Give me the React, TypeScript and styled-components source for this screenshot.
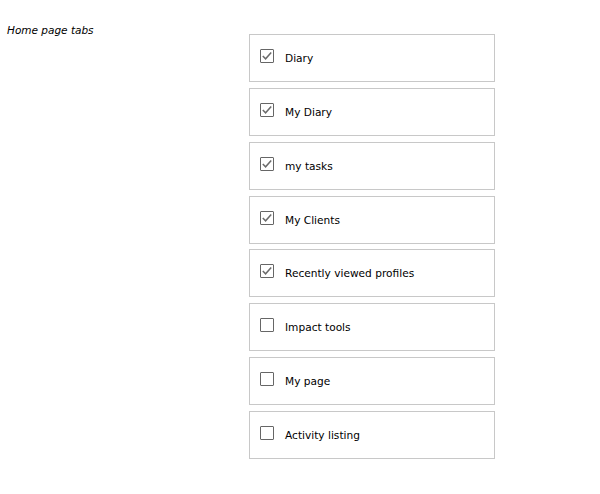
import React from "react";
import styled, { createGlobalStyle } from "styled-components";

const Global = createGlobalStyle`
  html, body { margin: 0; padding: 0; background: #fff; }
  body { font-family: "DejaVu Sans", Verdana, sans-serif; color: #000; }
`;

const Page = styled.div`
  display: grid;
  grid-template-columns: 249px 246px;
  align-items: start;
  padding-top: 24px;
  box-sizing: border-box;
  width: 600px;
  height: 494px;
`;

const Label = styled.div`
  font-size: 10.5px;
  font-style: italic;
  line-height: 13px;
  padding-left: 7px;
`;

const List = styled.div`
  margin-top: 10px;
  display: flex;
  flex-direction: column;
  gap: 5.86px;
`;

const Item = styled.label`
  box-sizing: border-box;
  height: 48px;
  border: 1px solid #c8c8c8;
  display: flex;
  align-items: center;
  padding: 1px 0 0 10px;
  gap: 11px;
  font-size: 10.6px;
`;

const Box = styled.span<{ $checked: boolean }>`
  width: 14px;
  height: 14px;
  box-sizing: border-box;
  border: 1px solid #666;
  border-radius: 1px;
  display: flex;
  align-items: center;
  justify-content: center;
  margin-top: -5px;
  background: #fff;
`;

const Text = styled.span`
  line-height: 13px;
`;

const items: [string, boolean][] = [
  ["Diary", true],
  ["My Diary", true],
  ["my tasks", true],
  ["My Clients", true],
  ["Recently viewed profiles", true],
  ["Impact tools", false],
  ["My page", false],
  ["Activity listing", false],
];

export default function App() {
  return (
    <>
      <Global />
      <Page>
        <Label>Home page tabs</Label>
        <List>
          {items.map(([t, c]) => (
            <Item key={t}>
              <Box $checked={c}>
                {c && (
                  <svg width="12" height="12" viewBox="0 0 12 12">
                    <path d="M1.8 6 L4.6 8.8 L10.2 2.6" fill="none" stroke="#6b6b6b" strokeWidth="1.5" />
                  </svg>
                )}
              </Box>
              <Text>{t}</Text>
            </Item>
          ))}
        </List>
      </Page>
    </>
  );
}
